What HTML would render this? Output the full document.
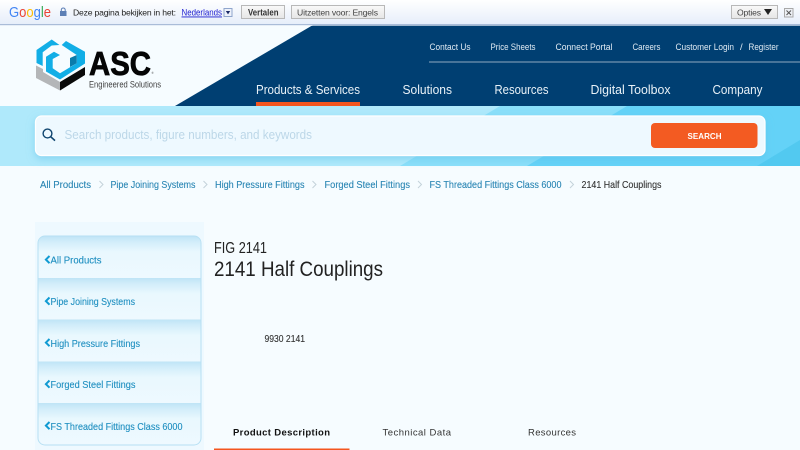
<!DOCTYPE html>
<html><head><meta charset="utf-8"><title>2141 Half Couplings</title>
<style>
html,body{margin:0;padding:0;width:800px;height:450px;overflow:hidden;background:#f6fcff}
svg{display:block}
text{font-family:"Liberation Sans",sans-serif}
.t{font-size:9.5px;fill:#dfeaf3}
.n{font-size:13px;fill:#e8f1f7}
.b{font-size:10.5px;fill:#2a86b4;stroke:#2a86b4;stroke-width:.12px}
.s{font-size:10.5px;fill:#1f8fc0;stroke:#1f8fc0;stroke-width:.12px}
.c{fill:none;stroke:#c4d2da;stroke-width:1}
</style></head><body>
<svg width="800" height="450" viewBox="0 0 800 450" xmlns="http://www.w3.org/2000/svg">
<defs>
<linearGradient id="bar" x1="0" y1="0" x2="0" y2="1"><stop offset="0" stop-color="#ffffff"/><stop offset="1" stop-color="#e6eefa"/></linearGradient>
<linearGradient id="it" x1="0" y1="0" x2="0" y2="1"><stop offset="0" stop-color="#bfe4f6"/><stop offset="0.14" stop-color="#d2edfa"/><stop offset="0.38" stop-color="#e9f8fe"/><stop offset="1" stop-color="#eef9ff"/></linearGradient>
<linearGradient id="btn" x1="0" y1="0" x2="0" y2="1"><stop offset="0" stop-color="#f9f9f9"/><stop offset="1" stop-color="#e6e6e6"/></linearGradient>
<filter id="sh" x="-5%" y="-30%" width="110%" height="170%"><feDropShadow dx="0" dy="3" stdDeviation="4" flood-color="#5cbfe8" flood-opacity="0.5"/></filter>
</defs>

<rect width="800" height="450" fill="#f6fcff"/>

<!-- header -->
<polygon points="313,25 800,25 800,106 175,106" fill="#003f72"/>
<rect x="429" y="61.5" width="371" height="1" fill="#8fa9c0"/>

<!-- logo -->
<polygon points="36.5,50 51.7,39.5 59.5,45 51.7,45.5 42.7,52.3 42.7,66 36.5,63" fill="#12aee6"/>
<polygon points="61.7,45 66,41 85,51.7 85,63.5 60,79.5 46,71.5 46,56.7 54,51.7 60,55 52.7,59 52.7,68.3 60,73.3 76.7,63.3 76.7,55" fill="#12aee6"/>
<polygon points="70,58 76.7,55 76.7,63.3 70,67" fill="#0a7cab"/>
<polygon points="36,65.5 36,78 60,90.5 60,82 43,72 43,69" fill="#b4b6b8"/>
<polygon points="60,90.5 85,75 85,67 60,82" fill="#0a0a0a"/>
<text x="89" y="75" font-size="33" font-weight="700" fill="#050505" stroke="#050505" stroke-width=".8" textLength="62" lengthAdjust="spacingAndGlyphs">ASC</text>
<text x="151.5" y="74" font-size="3" fill="#333">®</text>
<text x="89" y="87.5" font-size="9" fill="#3f3f3f" textLength="72" lengthAdjust="spacingAndGlyphs">Engineered Solutions</text>

<!-- utility nav -->
<text class="t" x="429.5" y="50" textLength="41" lengthAdjust="spacingAndGlyphs">Contact Us</text>
<text class="t" x="490.5" y="50" textLength="45" lengthAdjust="spacingAndGlyphs">Price Sheets</text>
<text class="t" x="555.5" y="50" textLength="57" lengthAdjust="spacingAndGlyphs">Connect Portal</text>
<text class="t" x="632.5" y="50" textLength="28" lengthAdjust="spacingAndGlyphs">Careers</text>
<text class="t" x="675.5" y="50" textLength="58.5" lengthAdjust="spacingAndGlyphs">Customer Login</text>
<text class="t" x="740" y="50">/</text>
<text class="t" x="748.5" y="50" textLength="30" lengthAdjust="spacingAndGlyphs">Register</text>

<!-- main nav -->
<text class="n" x="256" y="94" textLength="104" lengthAdjust="spacingAndGlyphs">Products &amp; Services</text>
<rect x="256" y="102" width="104" height="4" fill="#f4561f"/>
<text class="n" x="402.5" y="94" textLength="49.5" lengthAdjust="spacingAndGlyphs">Solutions</text>
<text class="n" x="494.5" y="94" textLength="54" lengthAdjust="spacingAndGlyphs">Resources</text>
<text class="n" x="590.5" y="94" textLength="80" lengthAdjust="spacingAndGlyphs">Digital Toolbox</text>
<text class="n" x="712.5" y="94" textLength="50" lengthAdjust="spacingAndGlyphs">Company</text>

<!-- search band -->
<rect y="106" width="800" height="60" fill="#afe9fb"/>
<polygon points="400,166 500,106 800,106 800,166" fill="#8adff9"/>
<polygon points="527,166 627,106 800,106 800,166" fill="#64d2f7"/>
<polygon points="757,166 800,140 800,166" fill="#52c9f0"/>
<rect x="35.5" y="116" width="729.5" height="39.5" rx="6" fill="#eef9ff" stroke="#ffffff" stroke-width="1.2" filter="url(#sh)"/>
<circle cx="47.5" cy="133.5" r="4.4" fill="none" stroke="#0f456f" stroke-width="1.4"/>
<line x1="50.8" y1="136.8" x2="55" y2="140.6" stroke="#0f456f" stroke-width="1.6"/>
<text x="64.5" y="139" font-size="13" fill="#bcd7e8" textLength="247.5" lengthAdjust="spacingAndGlyphs">Search products, figure numbers, and keywords</text>
<rect x="651" y="123" width="106.5" height="25" rx="4" fill="#f35b22"/>
<text x="687.5" y="139" font-size="8" font-weight="700" fill="#fff" textLength="34" lengthAdjust="spacing">SEARCH</text>

<!-- breadcrumbs -->
<text class="b" x="40" y="188" textLength="51" lengthAdjust="spacingAndGlyphs">All Products</text>
<path class="c" d="M99.5 181l3.5 3.5-3.5 3.5"/>
<text class="b" x="110.5" y="188" textLength="85" lengthAdjust="spacingAndGlyphs">Pipe Joining Systems</text>
<path class="c" d="M203.5 181l3.5 3.5-3.5 3.5"/>
<text class="b" x="215" y="188" textLength="89.5" lengthAdjust="spacingAndGlyphs">High Pressure Fittings</text>
<path class="c" d="M312.5 181l3.5 3.5-3.5 3.5"/>
<text class="b" x="324.5" y="188" textLength="85.5" lengthAdjust="spacingAndGlyphs">Forged Steel Fittings</text>
<path class="c" d="M418 181l3.5 3.5-3.5 3.5"/>
<text class="b" x="429.5" y="188" textLength="132" lengthAdjust="spacingAndGlyphs">FS Threaded Fittings Class 6000</text>
<path class="c" d="M570 181l3.5 3.5-3.5 3.5"/>
<text x="581.5" y="188" font-size="10.5" fill="#333" stroke="#333" stroke-width=".12" textLength="80" lengthAdjust="spacingAndGlyphs">2141 Half Couplings</text>

<!-- sidebar -->
<rect x="35" y="222" width="169" height="228" fill="#eef9ff"/>
<rect x="38" y="236" width="163" height="209" rx="7" fill="#eef9ff"/>
<path d="M38.5 278V243a7 7 0 0 1 7-7h148a7 7 0 0 1 7 7v35z" fill="url(#it)"/>
<rect x="38.5" y="278" width="162" height="41.5" fill="url(#it)"/>
<rect x="38.5" y="319.5" width="162" height="42" fill="url(#it)"/>
<rect x="38.5" y="361.5" width="162" height="41.5" fill="url(#it)"/>
<path d="M38.5 403h162v35a7 7 0 0 1-7 7h-148a7 7 0 0 1-7-7z" fill="url(#it)"/>
<rect x="38" y="236" width="163" height="209" rx="7" fill="none" stroke="#b7e0f3" stroke-width="1"/>
<g fill="none" stroke="#0f9ad2" stroke-width="2">
<path d="M49.5 256l-3.6 3.6 3.6 3.6"/>
<path d="M49.5 297.5l-3.6 3.6 3.6 3.6"/>
<path d="M49.5 339l-3.6 3.6 3.6 3.6"/>
<path d="M49.5 380.5l-3.6 3.6 3.6 3.6"/>
<path d="M49.5 422l-3.6 3.6 3.6 3.6"/>
</g>
<text class="s" x="50.5" y="263.5" textLength="51" lengthAdjust="spacingAndGlyphs">All Products</text>
<text class="s" x="50.5" y="305" textLength="84.5" lengthAdjust="spacingAndGlyphs">Pipe Joining Systems</text>
<text class="s" x="50.5" y="347" textLength="89.5" lengthAdjust="spacingAndGlyphs">High Pressure Fittings</text>
<text class="s" x="50.5" y="388" textLength="85" lengthAdjust="spacingAndGlyphs">Forged Steel Fittings</text>
<text class="s" x="50.5" y="430" textLength="132" lengthAdjust="spacingAndGlyphs">FS Threaded Fittings Class 6000</text>

<!-- content -->
<text x="214" y="253" font-size="16" fill="#222" textLength="53" lengthAdjust="spacingAndGlyphs">FIG 2141</text>
<text x="214" y="276" font-size="21" fill="#222" textLength="169" lengthAdjust="spacingAndGlyphs">2141 Half Couplings</text>
<text x="264.5" y="342" font-size="10.5" fill="#333" stroke="#333" stroke-width=".12" textLength="40.5" lengthAdjust="spacingAndGlyphs">9930 2141</text>
<text x="233" y="435.5" font-size="9.5" font-weight="700" fill="#111" textLength="97" lengthAdjust="spacing">Product Description</text>
<text x="382.5" y="435.5" font-size="9.5" fill="#333" textLength="68.5" lengthAdjust="spacing">Technical Data</text>
<text x="528" y="435.5" font-size="9.5" fill="#333" textLength="48" lengthAdjust="spacing">Resources</text>
<rect x="214" y="448.5" width="135.5" height="1.5" fill="#f4561f"/>

<!-- translate bar -->
<rect width="800" height="24" fill="url(#bar)"/>
<rect y="24" width="800" height="1" fill="#a9bcd8"/>
<rect y="25" width="800" height="1" fill="#dfe8f3" opacity="0.7"/>
<text y="17" font-size="15" textLength="42" lengthAdjust="spacingAndGlyphs" x="9"><tspan fill="#4285f4">G</tspan><tspan fill="#ea4335">o</tspan><tspan fill="#fbbc05">o</tspan><tspan fill="#4285f4">g</tspan><tspan fill="#34a853">l</tspan><tspan fill="#ea4335">e</tspan></text>
<rect x="60" y="11" width="6.5" height="5" fill="#5d7fb5"/>
<path d="M61.3 11V9.6a2 2 0 0 1 3.9 0V11" fill="none" stroke="#5d7fb5" stroke-width="1"/>
<text x="73" y="15.5" font-size="8.6" fill="#222" textLength="103" lengthAdjust="spacing">Deze pagina bekijken in het:</text>
<text x="181.5" y="15.5" font-size="9" fill="#2020d0" text-decoration="underline" textLength="40.5" lengthAdjust="spacingAndGlyphs">Nederlands</text>
<rect x="224" y="8.5" width="8" height="8" fill="#eef2fb" stroke="#8fa5cc" stroke-width="1"/>
<polygon points="225.8,11 230.2,11 228,14.4" fill="#1a2a66"/>
<rect x="241.5" y="5.5" width="43" height="13" fill="url(#btn)" stroke="#b8b8b8"/>
<text x="248" y="15.5" font-size="9" font-weight="700" fill="#333" textLength="30.5" lengthAdjust="spacingAndGlyphs">Vertalen</text>
<rect x="291.5" y="5.5" width="93" height="13" fill="url(#btn)" stroke="#b8b8b8"/>
<text x="297" y="15.5" font-size="8.6" fill="#444" textLength="81" lengthAdjust="spacing">Uitzetten voor: Engels</text>
<rect x="731.5" y="5.5" width="46" height="13" fill="url(#btn)" stroke="#b8b8b8"/>
<text x="737" y="15.5" font-size="8.6" fill="#444" textLength="24" lengthAdjust="spacing">Opties</text>
<polygon points="764,9 772,9 768,15" fill="#222"/>
<rect x="784.5" y="8.5" width="8.5" height="8.5" fill="#eef1f6" stroke="#a8a8a8"/>
<path d="M786.5 10.5l4.5 4.5M791 10.5l-4.5 4.5" stroke="#555" stroke-width="1"/>
</svg>
</body></html>
